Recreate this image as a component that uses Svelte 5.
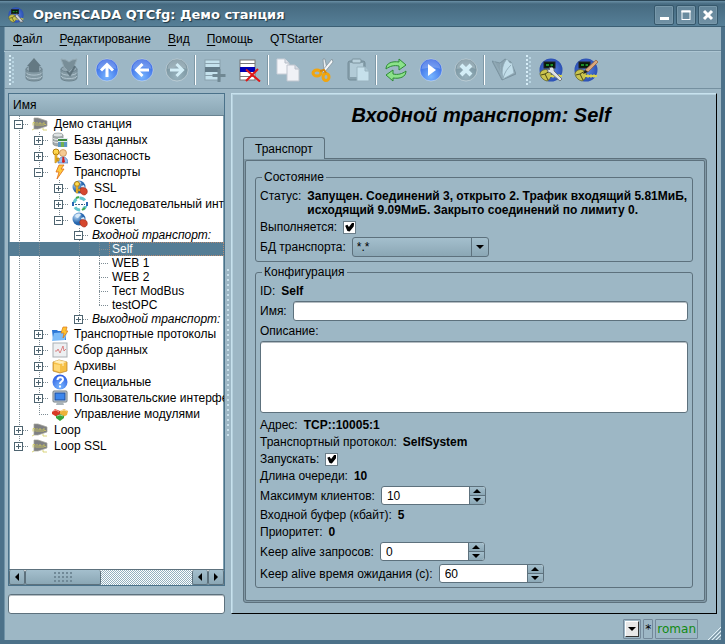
<script lang="ts">
	interface Row {
		level: number;
		text: string;
		box?: '+' | '-';
		icon?: string;
		italic?: boolean;
	}

	const menu = ['Файл', 'Редактирование', 'Вид', 'Помощь'];

	const groups = [
		[
			['load', 'Загрузить'],
			['save', 'Сохранить']
		],
		[
			['up', 'Вверх'],
			['back', 'Назад'],
			['forward', 'Вперёд']
		],
		[
			['add', 'Добавить'],
			['remove', 'Удалить']
		],
		[
			['copy', 'Копировать'],
			['cut', 'Вырезать'],
			['paste', 'Вставить']
		],
		[
			['refresh', 'Обновить'],
			['start', 'Запустить'],
			['stop', 'Остановить']
		],
		[['manual', 'Руководство']]
	];

	const starters = [
		['config', 'Конфигуратор'],
		['vision', 'Разработка']
	];

	const rows: Row[] = [
		{ level: 0, text: 'Демо станция', box: '-', icon: 'station' },
		{ level: 1, text: 'Базы данных', box: '+', icon: 'db' },
		{ level: 1, text: 'Безопасность', box: '+', icon: 'security' },
		{ level: 1, text: 'Транспорты', box: '-', icon: 'bolt' },
		{ level: 2, text: 'SSL', box: '+', icon: 'ssl' },
		{ level: 2, text: 'Последовательный интерфейс', box: '+', icon: 'serial' },
		{ level: 2, text: 'Сокеты', box: '-', icon: 'globe' },
		{ level: 3, text: 'Входной транспорт:', box: '-', italic: true },
		{ level: 4, text: 'Self' },
		{ level: 4, text: 'WEB 1' },
		{ level: 4, text: 'WEB 2' },
		{ level: 4, text: 'Тест ModBus' },
		{ level: 4, text: 'testOPC' },
		{ level: 3, text: 'Выходной транспорт:', box: '+', italic: true },
		{ level: 1, text: 'Транспортные протоколы', box: '+', icon: 'folder' },
		{ level: 1, text: 'Сбор данных', box: '+', icon: 'chart' },
		{ level: 1, text: 'Архивы', box: '+', icon: 'archive' },
		{ level: 1, text: 'Специальные', box: '+', icon: 'help' },
		{ level: 1, text: 'Пользовательские интерфейсы', box: '+', icon: 'screen' },
		{ level: 1, text: 'Управление модулями', icon: 'modules' },
		{ level: 0, text: 'Loop', box: '+', icon: 'station' },
		{ level: 0, text: 'Loop SSL', box: '+', icon: 'station' }
	];

	// is there another node of this level further down the same branch
	function hasNext(i: number, level: number): boolean {
		for (const row of rows.slice(i + 1)) {
			if (row.level < level) return false;
			if (row.level === level) return true;
		}
		return false;
	}

	const tree = rows.map((row, i) => ({
		...row,
		cells: Array.from({ length: row.level + 1 }, (_, c) => ({
			own: c === row.level,
			next: hasNext(i, c)
		}))
	}));

	let selected = $state('Self');
	let filter = $state('');
	let running = $state(true);
	let autostart = $state(true);
	let db = $state('*.*');
	let name = $state('');
	let description = $state('');
	let spins = $state({ clients: 10, requests: 0, wait: 60 });
</script>

{#snippet ball(fill: string)}
	<circle cx="12" cy="12" r="11" fill="url(#{fill})" stroke="#fff" stroke-opacity=".35" />
	<path d="M2.500 11a9.500 9.500 0 0 1 19 0c-6-2.500-12-1.500-19 0z" fill="#fff" opacity=".22" />
{/snippet}

{#snippet scada()}
	<circle cx="12" cy="12" r="11.500" fill="url(#scada)" />
	<rect x="5" y="4" width="11" height="6" fill="#061a08" stroke="#222" />
	<path d="M7 6h3v2h-3zM11.500 6h2.500v2h-2.500z" fill="#1d8a2a" />
	<path d="M1 15a6 6 0 0 1 11 0c1 3-1 7-4 8-4-1-7-4-7-8z" fill="#c9c44e" stroke="#55541c" stroke-width=".7" />
	<path d="M2 17l4-1 5-3M6 16l3 6" stroke="#4c4a14" fill="none" />
	<path d="M11 18h12" stroke="#d8d24f" stroke-width="2" />
	<path d="M14 16v4M17 16v4M20 16v4" stroke="#d8d24f" />
{/snippet}

{#snippet tool(id: string)}
	<svg class="tool-icon" viewBox="0 0 24 24" aria-hidden="true">
		{#if id === 'load' || id === 'save'}
			<path d="M4 11v9c0 4 16 4 16 0v-9" fill="#8399a3" stroke="#6d838e" />
			<ellipse cx="12" cy="11" rx="8" ry="3" fill="#90a5b0" stroke="#6d838e" />
			<path d="M4 14.500c1 3.500 15 3.500 16 0M4 18c1 3.500 15 3.500 16 0" fill="none" stroke="#b0c3cd" />
			{#if id === 'load'}
				<path d="M12 0l7 8h-2v6h-10v-6h-2z" fill="#647983" />
			{:else}
				<path d="M4 1l5 1 3 2 3-2 5-1-3 8-5 5-5-5z" fill="#788e98" stroke="#94a9b3" />
				<path d="M10 13l3 4 5-9" fill="none" stroke="#5e737d" stroke-width="2" />
			{/if}
		{:else if id === 'up'}
			{@render ball('blue')}
			<path d="M12 19v-12M6 12.500l6-6 6 6" fill="none" stroke="#fff" stroke-width="3" />
		{:else if id === 'back'}
			{@render ball('blue')}
			<path d="M19 12h-12M12.500 6l-6 6 6 6" fill="none" stroke="#fff" stroke-width="3" />
		{:else if id === 'forward'}
			{@render ball('grey')}
			<path d="M5 12h12M11.500 6l6 6-6 6" fill="none" stroke="#d3eef7" stroke-width="3" />
		{:else if id === 'add'}
			<rect x="2" y="2" width="15" height="20" fill="#c5e2ed" stroke="#8aa1ad" />
			<path d="M2 5.500h15M2 17.500h15" stroke="#8aa1ad" />
			<rect x="2" y="9" width="15" height="5" fill="#637b88" />
			<path d="M16 11v13M9.500 17.500h13" stroke="#708893" stroke-width="3" />
		{:else if id === 'remove'}
			<rect x="2" y="2" width="15" height="20" fill="#fff" stroke="#777" />
			<path d="M2 5.500h15M2 18.500h15" stroke="#777" />
			<rect x="2" y="9" width="15" height="5" fill="#0000b5" />
			<path d="M8 11.500l14 12M20 11l-12 12" stroke="#df1717" stroke-width="2" />
		{:else if id === 'copy'}
			<path d="M1 1h8l4 4v11h-12z" fill="#f5f6fa" stroke="#c9cfd8" />
			<path d="M9 1v4h4" fill="#dde1e9" stroke="#b7bec8" />
			<path d="M11 7h8l4 4v12h-12z" fill="#f0f1f6" stroke="#bfc6cf" />
			<path d="M19 7v4h4" fill="#d6dbe4" stroke="#b7bec8" />
		{:else if id === 'cut'}
			<path d="M12 1l2 0 2 10-3 4z" fill="#e7edf1" stroke="#7c8b94" stroke-width=".7" />
			<path d="M21 1l1 3-9 11-2-2z" fill="#f4f7f9" stroke="#7c8b94" stroke-width=".7" />
			<ellipse cx="6" cy="15" rx="4" ry="3" fill="none" stroke="#f1a50f" stroke-width="3" />
			<ellipse cx="15" cy="19" rx="3" ry="3.500" fill="none" stroke="#f1a50f" stroke-width="3" />
			<path d="M9 13l4-1 2 3" stroke="#d98708" stroke-width="2" fill="none" />
		{:else if id === 'paste'}
			<rect x="2" y="3" width="17" height="19" rx="2" fill="#88a1ad" stroke="#738b97" />
			<rect x="4" y="5" width="13" height="14" fill="#b2cbd7" />
			<rect x="6" y="1" width="9" height="4" rx="1" fill="#b9d1dc" stroke="#7a929d" />
			<path d="M11 9h8l4 4v10h-12z" fill="#c6e0eb" stroke="#9bb4c0" />
			<path d="M19 9v4h4" fill="#acc7d4" stroke="#9bb4c0" />
		{:else if id === 'refresh'}
			<path d="M2 11c0-6 6-8 13-7l0-3 7 6-7 5 0-4c-5-1-9 0-13 3z" fill="#8be28a" stroke="#2e8b36" />
			<path d="M22 13c0 6-6 8-13 7l0 3-7-6 7-5 0 4c5 1 9 0 13-3z" fill="#8be28a" stroke="#2e8b36" />
		{:else if id === 'start'}
			{@render ball('blue')}
			<path d="M9 6l8 6-8 6z" fill="#fff" />
		{:else if id === 'stop'}
			{@render ball('grey')}
			<path d="M7 7l10 10M17 7l-10 10" stroke="#d3eef7" stroke-width="4" />
		{:else if id === 'manual'}
			<path d="M0 3l10 19 14-6-5-12-6-3-5 4z" fill="#8ba3af" stroke="#718a96" stroke-width=".7" />
			<path d="M2 3l9 17c-2-7 0-15 4-19l3 4 2 0 2 10-11 6z" fill="#c2deea" stroke="#8fa9b6" stroke-width=".7" />
			<path d="M11 20c-3-6-3-10-2-15M11 20c2-6 4-9 8-13" fill="none" stroke="#94afbc" />
		{:else if id === 'config'}
			{@render scada()}
			<path d="M10 10l3-1 2 2 0 2 8 8-2 2-9-8-3-1-1-3 2 1 1-1z" fill="#dfe2e4" stroke="#62676b" stroke-width=".8" />
		{:else if id === 'vision'}
			{@render scada()}
			<path d="M11 12l11-10 2 2-10 10z" fill="#d9a77c" stroke="#8d5c39" stroke-width=".7" />
			<path d="M11 12l3 2-5 2z" fill="#222" />
		{/if}
	</svg>
{/snippet}

{#snippet planet()}
	<circle cx="7" cy="7" r="6.500" fill="url(#planet)" />
	<path d="M3 4c2-3 5-3 6-1-2 1-2 3-4 3zM9 6l3-1 1 3-3 1z" fill="#d8eaf8" />
	<path d="M8 9c1-2 6-2 7 1s-1 5-3 5-5-3-4-6z" fill="#d5472e" stroke="#a02a1a" stroke-width=".6" />
{/snippet}

{#snippet node(id: string)}
	<svg class="node-icon" viewBox="0 0 16 16" aria-hidden="true">
		{#if id === 'station'}
			<path d="M2 2h4l9 3v5l-9 3h-4z" fill="#7f8083" stroke="#a5a59a" stroke-width=".7" />
			<path d="M1 9.500v-3h2v3M5 6v4M7 10v-3h2v3M11 10v-3h2M12 8.500h2M2 13l-2 1M11 12v2h4" fill="none" stroke="#cfc95a" stroke-width=".8" />
		{:else if id === 'db'}
			<path d="M1 3v9c0 2 8 3 10 1v-10z" fill="#a4abad" stroke="#7c8588" stroke-width=".7" />
			<ellipse cx="6" cy="3" rx="5" ry="2" fill="#dfe3e4" stroke="#8c9597" stroke-width=".7" />
			<path d="M1 6c1 2 9 2 10 0M1 9c1 2 9 2 10 0" stroke="#eef0f0" fill="none" />
			<rect x="6" y="6" width="10" height="9" fill="#e0ebef" />
			<path d="M6 7h9v2h-9z" fill="#3c8a3e" />
			<path d="M6 10h3v5h-3zM12 10h3v5h-3z" fill="#5b98c5" />
			<path d="M9 10h3v5h-3z" fill="#74b04f" />
		{:else if id === 'security'}
			<circle cx="11" cy="5" r="3.500" fill="#f5ca92" stroke="#c28445" stroke-width=".7" />
			<path d="M6 15c0-8 10-8 10 0z" fill="#9cc0ee" stroke="#4b75b5" stroke-width=".7" />
			<path d="M10.500 9h1.500l1 5-2 1-1-1z" fill="#d32020" />
			<circle cx="4" cy="4" r="3" fill="#ffd74b" stroke="#b47b0c" />
			<path d="M3 6h2v8l-2 1zM5 10h2v3h-2z" fill="#f8c22d" stroke="#b47b0c" stroke-width=".6" />
		{:else if id === 'bolt'}
			<path d="M7 1h5l-3 4h3l-7 10 2-7h-3z" fill="#ffca3d" stroke="#dd6a16" stroke-width=".8" />
		{:else if id === 'ssl'}
			{@render planet()}
			<circle cx="5" cy="4" r="2.500" fill="#ffdc52" stroke="#a87910" />
			<path d="M4 6h2v7h-2zM6 9h2v2h-2z" fill="#f3bc2b" stroke="#a87910" stroke-width=".5" />
		{:else if id === 'globe'}
			{@render planet()}
		{:else if id === 'serial'}
			<circle cx="8" cy="8" r="6" fill="none" stroke="#63c4cd" stroke-width="3" stroke-dasharray="6 3" />
			<path d="M1 6v4M15 6v4" stroke="#2a67b5" stroke-width="2" />
			<path d="M4 2l3-1M10 14l3-2" stroke="#42a949" stroke-width="2" />
			<path d="M2 7h12v3h-12z" fill="#fff" />
			<path d="M3 8.500h10" stroke="#3c5d85" stroke-dasharray="2 1" />
		{:else if id === 'folder'}
			<path d="M0 4h5l1 1h8v9h-13z" fill="#2d78d6" />
			<path d="M2 7l13-1-2 8-13 1z" fill="#7cbcf9" />
			<path d="M11 1h4l-1 4h2l-5 7 1-5h-3z" fill="#ffc331" stroke="#d97517" stroke-width=".7" />
		{:else if id === 'chart'}
			<rect x="1" y="1" width="14" height="14" fill="#edf0f2" stroke="#a9afb4" />
			<path d="M3 9l2 0 1-2 2 4 3-7 1 5 2-2" fill="none" stroke="#d66a6a" stroke-width=".8" />
		{:else if id === 'archive'}
			<path d="M1 4l6-2 8 2v9l-7 2-7-2z" fill="#f6bf45" stroke="#b77d1b" stroke-width=".7" />
			<path d="M1 4l6-2 8 2-7 2z" fill="#ffe9ab" />
			<path d="M2 6l6 1v7l-6-2z" fill="#ffd876" />
			<path d="M4 3l7 2v3" stroke="#fff3cb" fill="none" />
		{:else if id === 'help'}
			<circle cx="8" cy="8" r="7.500" fill="url(#blue)" />
			<path d="M5.500 6c0-4 5.500-3.500 5.500-.5 0 2-3 2-3 4.500M8 11.500v2" fill="none" stroke="#fff" stroke-width="2" />
		{:else if id === 'screen'}
			<rect x="1" y="1" width="14" height="11" rx="1" fill="#cdd5da" stroke="#6d7980" />
			<rect x="3" y="3" width="10" height="7" fill="#3c86ec" stroke="#1e4e9c" />
			<path d="M5 12h6l1 3h-8z" fill="#aab3b8" />
		{:else if id === 'modules'}
			<path d="M0 6l3-3 5 2v4l-3 2-5-3z" fill="#d93a26" />
			<path d="M8 5l4-2 4 2-1 4-4 2-3-2z" fill="#edb13a" />
			<path d="M4 10l4-2 4 2v2l-4 3-4-3z" fill="#38a43a" />
			<path d="M1 5l3-1 3 2M9 5l3-1 3 1M5 10l3-1 3 1" fill="none" stroke="#fff" opacity=".5" />
		{/if}
	</svg>
{/snippet}

{#snippet arrow(d: string)}
	<svg class="arrow" viewBox="0 0 8 8" aria-hidden="true"><path {d} /></svg>
{/snippet}

{#snippet spin(id: 'clients' | 'requests' | 'wait', label: string)}
	<div class="row">
		<label for={id}>{label}</label>
		<span class="spin">
			<input {id} type="number" min="0" bind:value={spins[id]} />
			<span class="steps">
				<button aria-label="Больше" onclick={() => spins[id]++}>{@render arrow('M4 2l4 4h-8z')}</button>
				<button aria-label="Меньше" onclick={() => spins[id]--}>{@render arrow('M4 6l-4-4h8z')}</button>
			</span>
		</span>
	</div>
{/snippet}

<svg class="defs" aria-hidden="true">
	<defs>
		<radialGradient id="blue" cx=".5" cy=".8" r=".8">
			<stop offset="0" stop-color="#78b6ff" />
			<stop offset="1" stop-color="#2c5ce0" />
		</radialGradient>
		<radialGradient id="grey" cx=".5" cy=".8" r=".8">
			<stop offset="0" stop-color="#98b3be" />
			<stop offset="1" stop-color="#728d99" />
		</radialGradient>
		<radialGradient id="scada">
			<stop offset="0" stop-color="#5d88e4" />
			<stop offset="1" stop-color="#2b50b4" />
		</radialGradient>
		<radialGradient id="planet" cx=".3" cy=".3">
			<stop offset="0" stop-color="#b9d9f5" />
			<stop offset="1" stop-color="#2566ae" />
		</radialGradient>
	</defs>
</svg>

<div class="window">
	<header class="titlebar">
		<svg class="app-icon" viewBox="0 0 24 24" aria-hidden="true">
			{@render scada()}
			<path d="M13 10l10 12-4 1-8-9z" fill="#cfd2d4" stroke="#555" />
		</svg>
		<h1>OpenSCADA QTCfg: Демо станция</h1>
		<button aria-label="Свернуть"><svg viewBox="0 0 18 18"><path d="M5 12.500h9" stroke-width="3" /></svg></button>
		<button aria-label="Развернуть"><svg viewBox="0 0 18 18"><path d="M4.500 5h9M4.500 13.500h9M5 5v8M13 5v8" stroke-width="1" /><path d="M4.500 5.500h9" stroke-width="2" /></svg></button>
		<button aria-label="Закрыть"><svg viewBox="0 0 18 18"><path d="M5 5l8 8M13 5l-8 8" stroke-width="3" /></svg></button>
	</header>

	<nav class="menubar">
		{#each menu as item (item)}
			<button><u>{item[0]}</u>{item.slice(1)}</button>
		{/each}
		<button>QTStarter</button>
	</nav>

	<div class="toolbar" role="toolbar" aria-label="Панель инструментов">
		<span class="grip"></span>
		{#each groups as group, i (i)}
			{#if i > 0}<span class="sep"></span>{/if}
			{#each group as [id, label] (id)}
				<button aria-label={label}>{@render tool(id)}</button>
			{/each}
		{/each}
		<span class="grip second"></span>
		{#each starters as [id, label] (id)}
			<button aria-label={label}>{@render tool(id)}</button>
		{/each}
	</div>

	<main>
		<aside>
			<div class="tree">
				<div class="tree-head">Имя</div>
				<div class="tree-body" role="tree" aria-label="Имя">
					{#each tree as row (row.text)}
						<div
							class="node"
							class:tall={row.icon}
							class:selected={selected === row.text}
							role="treeitem"
							tabindex="-1"
							aria-selected={selected === row.text}
							onclick={() => (selected = row.text)}
							onkeydown={() => {}}
						>
							{#each row.cells as cell, c (c)}
								<span class="cell" class:own={cell.own} class:next={cell.next}>
									{#if cell.own && row.box}
										<svg class="box" viewBox="0 0 9 9" aria-hidden="true">
											<rect x=".5" y=".5" width="8" height="8" />
											<path d={row.box === '+' ? 'M2 4.500h5M4.500 2v5' : 'M2 4.500h5'} />
										</svg>
									{/if}
								</span>
							{/each}
							{#if row.icon}{@render node(row.icon)}{/if}
							<span class="node-text" class:italic={row.italic}>{row.text}</span>
						</div>
					{/each}
				</div>
				<div class="scrollbar">
					<button aria-label="Влево">{@render arrow('M6 0v8l-4-4z')}</button>
					<span class="thumb"><i></i></span>
					<span class="track"></span>
					<button aria-label="Влево">{@render arrow('M6 0v8l-4-4z')}</button>
					<button aria-label="Вправо">{@render arrow('M2 0v8l4-4z')}</button>
				</div>
			</div>
			<input class="text-input" aria-label="Поиск" bind:value={filter} />
		</aside>

		<div class="splitter"><span></span></div>

		<section class="page">
			<h2>Входной транспорт: Self</h2>
			<div class="tabs" role="tablist">
				<button class="tab" role="tab" aria-selected="true">Транспорт</button>
			</div>
			<div class="panel" role="tabpanel">
				<div class="panel-inner">
					<fieldset>
						<legend>Состояние</legend>
						<div class="row top">
							<span>Статус:</span>
							<b>
								Запущен. Соединений 3, открыто 2. Трафик входящий 5.81МиБ,<br />
								исходящий 9.09МиБ. Закрыто соединений по лимиту 0.
							</b>
						</div>
						<div class="row">
							<label for="running">Выполняется:</label>
							<input id="running" type="checkbox" bind:checked={running} />
						</div>
						<div class="row">
							<label for="db">БД транспорта:</label>
							<span class="combo">
								<select id="db" bind:value={db}>
									<option>*.*</option>
								</select>
								<span class="drop">{@render arrow('M4 6l-4-4h8z')}</span>
							</span>
						</div>
					</fieldset>

					<fieldset>
						<legend>Конфигурация</legend>
						<div class="row"><span>ID:</span><b>Self</b></div>
						<div class="row">
							<label for="name">Имя:</label>
							<input id="name" class="text-input" bind:value={name} />
						</div>
						<label for="description">Описание:</label>
						<textarea id="description" bind:value={description}></textarea>
						<div class="row"><span>Адрес:</span><b>TCP::10005:1</b></div>
						<div class="row"><span>Транспортный протокол:</span><b>SelfSystem</b></div>
						<div class="row">
							<label for="autostart">Запускать:</label>
							<input id="autostart" type="checkbox" bind:checked={autostart} />
						</div>
						<div class="row"><span>Длина очереди:</span><b>10</b></div>
						{@render spin('clients', 'Максимум клиентов:')}
						<div class="row"><span>Входной буфер (кбайт):</span><b>5</b></div>
						<div class="row"><span>Приоритет:</span><b>0</b></div>
						{@render spin('requests', 'Keep alive запросов:')}
						{@render spin('wait', 'Keep alive время ожидания (с):')}
					</fieldset>
				</div>
			</div>
		</section>
	</main>

	<footer>
		<span class="status"><button aria-label="Список">{@render arrow('M4 6l-4-4h8z')}</button></span>
		<span class="status">*</span>
		<span class="status user">roman</span>
		<svg class="resize" viewBox="0 0 13 13" aria-hidden="true">
			<path d="M0 13l13-13M4 13l9-9M8 13l5-5" stroke="#e4f2f8" />
			<path d="M2 13l11-11M6 13l7-7M10 13l3-3" stroke="#7992a0" />
		</svg>
	</footer>
</div>

<style>
	:global(body) {
		background: #9db7c5;
	}

	.defs {
		position: absolute;
		width: 0;
		height: 0;
	}

	.window {
		--line: #5d717d;
		--face: linear-gradient(#a4bfcd, #8ba7b5);
		box-sizing: border-box;
		display: flex;
		flex-direction: column;
		min-height: 100vh;
		border: solid #4c7189;
		border-width: 0 4px 4px;
		box-shadow: inset 1px 0 #7093a8;
		background: #9db7c5;
		color: #000;
		font: 12px/14px 'Liberation Sans', Arial, sans-serif;
	}

	.window *,
	.window *::before {
		box-sizing: border-box;
	}

	button,
	input,
	select,
	textarea {
		margin: 0;
		padding: 0;
		border: 0;
		border-radius: 0;
		background: none;
		color: inherit;
		font: inherit;
	}

	svg {
		display: block;
		flex: none;
	}

	.titlebar {
		display: flex;
		align-items: center;
		gap: 2px;
		height: 27px;
		margin: 0 -4px;
		padding: 2px 7px 0 8px;
		border-top: 1px solid #2c4757;
		border-bottom: 1px solid #3c5f74;
		background: linear-gradient(#6a8fa5, #466a80 3px, #567f97);
	}

	.app-icon {
		width: 16px;
		height: 16px;
	}

	h1 {
		flex: 1;
		margin: 0;
		padding-left: 7px;
		color: #fff;
		font: bold 13px/16px 'DejaVu Sans', sans-serif;
		text-shadow: 1px 1px 1px #1d3442;
	}

	.titlebar button {
		width: 20px;
		height: 20px;
		border: 1px solid #36586c;
		border-radius: 2px;
		background: linear-gradient(#64869a, #7191a4);
		box-shadow: inset 0 0 0 1px #7898aa;
	}

	.titlebar button svg {
		width: 18px;
		height: 18px;
		fill: none;
		stroke: #fff;
	}

	.menubar {
		display: flex;
		gap: 17px;
		height: 24px;
		padding-left: 9px;
		border-bottom: 1px solid #7590a0;
	}

	u {
		text-underline-offset: 2px;
	}

	.toolbar {
		display: flex;
		align-items: center;
		height: 38px;
		padding-left: 4px;
		border-top: 1px solid #adc6d3;
		border-bottom: 1px solid #7590a0;
	}

	.toolbar button {
		display: grid;
		place-items: center;
		width: 35px;
		height: 30px;
	}

	.tool-icon {
		width: 24px;
		height: 24px;
	}

	.grip {
		width: 8px;
		height: 30px;
		background:
			conic-gradient(from 270deg at 2px 2px, #d6edf7 90deg, transparent 0) 1px 0 / 8px 4px,
			conic-gradient(from 270deg at 2px 2px, #b9d5e2 90deg, transparent 0) 4px 2px / 8px 4px;
	}

	.grip.second {
		margin: 0 0 0 4px;
	}

	.sep {
		width: 3px;
		height: 30px;
		border-left: 1px solid #7f99a7;
		background: linear-gradient(90deg, #fff 1px, transparent 1px);
	}

	main {
		flex: 1;
		display: flex;
		padding: 4px 4px 0;
	}

	aside {
		display: flex;
		flex-direction: column;
		flex: 0 0 217px;
		gap: 8px;
		min-width: 0;
	}

	.tree {
		flex: 1;
		display: flex;
		flex-direction: column;
		border: 1px solid #4b728a;
		box-shadow: inset 0 0 0 1px #82a1b1;
		background: #fff;
		overflow: hidden;
	}

	.tree-head {
		height: 22px;
		padding: 4px 4px 0;
		border-bottom: 1px solid #698391;
		background: var(--face);
	}

	.tree-body {
		flex: 1;
		overflow: hidden;
	}

	.node {
		display: flex;
		align-items: center;
		height: 14px;
		white-space: nowrap;
		cursor: default;
	}

	.node.tall {
		height: 16px;
	}

	.node.selected {
		background: #557d95;
		color: #fff;
	}

	/* dotted branch lines, a pixel on and a pixel off */
	.cell {
		--dots: repeating-linear-gradient(#7e8c94 0 1px, transparent 1px 2px);
		--dash: repeating-linear-gradient(90deg, #7e8c94 0 1px, transparent 1px 2px);
		display: grid;
		align-items: center;
		flex: 0 0 20px;
		height: 100%;
		padding-left: 5px;
	}

	.cell.next {
		background: var(--dots) 10px 0 / 1px 100% no-repeat;
	}

	.cell.own {
		background:
			var(--dots) 10px 0 / 1px 50% no-repeat,
			var(--dash) 10px 50% / 10px 1px no-repeat;
	}

	.cell.own.next {
		background:
			var(--dots) 10px 0 / 1px 100% no-repeat,
			var(--dash) 10px 50% / 10px 1px no-repeat;
	}

	.box {
		width: 9px;
		height: 9px;
		fill: #fff;
		stroke: #4e6470;
	}

	.node-icon {
		width: 16px;
		height: 16px;
		margin: 0 3px;
	}

	.node-text {
		flex: 1;
		padding-left: 3px;
	}

	.selected .node-text {
		outline: 1px dotted #b58a72;
		outline-offset: -1px;
	}

	.italic {
		font-style: italic;
	}

	.scrollbar {
		display: flex;
		height: 16px;
		border-top: 1px solid var(--line);
	}

	.scrollbar button,
	.thumb {
		display: grid;
		place-items: center;
		flex: 0 0 16px;
		border: 1px solid var(--line);
		border-top: 0;
		border-radius: 2px;
		background: var(--face);
	}

	.scrollbar .thumb {
		flex-basis: 76px;
	}

	.thumb i {
		width: 19px;
		height: 10px;
		background: conic-gradient(from 270deg at 2px 2px, #708997 90deg, transparent 0) 0 0 / 4px 4px;
	}

	.track {
		flex: 1;
		background: conic-gradient(#93b0bf 90deg, #fff 0 180deg, #93b0bf 0 270deg, #fff 0) 0 0 / 2px 2px;
	}

	.arrow {
		width: 8px;
		height: 8px;
		fill: #000;
	}

	.text-input,
	textarea {
		display: block;
		width: 100%;
		height: 20px;
		padding: 0 4px;
		border: 1px solid var(--line);
		border-radius: 3px;
		background: #fff;
		box-shadow: inset 0 1px #b5bdc2;
	}

	.splitter {
		display: grid;
		place-items: center;
		flex: 0 0 6px;
	}

	.splitter span {
		width: 4px;
		height: 170px;
		background: conic-gradient(from 270deg at 2px 2px, #c9e0eb 90deg, transparent 0) 1px 0 / 4px 5px;
	}

	.page {
		flex: 1;
		display: flex;
		flex-direction: column;
		min-width: 0;
		padding: 9px 9px 10px 11px;
		border: 1px solid;
		border-color: #c8e2ee #000 #000 #c8e2ee;
		box-shadow: inset 1px 1px #b5d0dd;
	}

	h2 {
		margin: 0;
		padding-left: 12px;
		font: italic bold 20px/24px 'Liberation Sans', Arial, sans-serif;
		text-align: center;
	}

	.tabs {
		display: flex;
		padding-top: 10px;
	}

	.tab {
		position: relative;
		z-index: 1;
		height: 22px;
		margin-bottom: -1px;
		padding: 0 11px;
		border: 1px solid var(--line);
		border-bottom: 0;
		border-radius: 3px 3px 0 0;
		background: #9db7c5;
	}

	.panel {
		flex: 1;
		display: flex;
		padding: 1px;
		border: 1px solid var(--line);
		border-radius: 0 3px 3px 3px;
		background: #8199a6;
	}

	.panel-inner {
		flex: 1;
		display: flex;
		flex-direction: column;
		gap: 3px;
		min-width: 0;
		padding: 9px 11px 11px 9px;
		border: 1px solid var(--line);
		border-radius: 2px;
		background: #9db7c5;
	}

	fieldset {
		display: flex;
		flex-direction: column;
		gap: 3px;
		min-width: 0;
		margin: 0;
		padding: 5px 4px 4px;
		border: 1px solid var(--line);
		border-radius: 3px;
	}

	legend {
		margin-left: 2px;
		padding: 0 2px;
	}

	.row {
		display: flex;
		align-items: center;
		gap: 6px;
		white-space: nowrap;
	}

	.row.top {
		align-items: flex-start;
	}

	input[type='checkbox'] {
		appearance: none;
		display: grid;
		place-items: center;
		width: 13px;
		height: 13px;
		border: 1px solid #6b7e89;
		background: #fff;
	}

	input[type='checkbox']:checked::before {
		content: '';
		width: 9px;
		height: 9px;
		background: #000;
		clip-path: polygon(0 35%, 25% 25%, 42% 50%, 80% 0, 100% 8%, 95% 45%, 50% 100%, 25% 95%);
	}

	.combo {
		display: grid;
		grid-template-columns: 118px 17px;
		height: 20px;
		border: 1px solid var(--line);
		border-radius: 3px;
		background: var(--face);
	}

	.combo select {
		grid-area: 1 / 1 / 2 / 3;
		appearance: none;
		padding-left: 4px;
	}

	.drop {
		grid-area: 1 / 2;
		display: grid;
		place-items: center;
		border-left: 1px solid var(--line);
		pointer-events: none;
	}

	textarea {
		height: 72px;
		margin-bottom: 2px;
		resize: none;
	}

	.spin {
		display: flex;
		height: 19px;
		border: 1px solid var(--line);
		border-radius: 3px;
		background: #fff;
		overflow: hidden;
	}

	.spin input {
		width: 87px;
		padding-left: 5px;
		appearance: textfield;
	}

	.spin input::-webkit-inner-spin-button {
		appearance: none;
	}

	.steps {
		display: grid;
		grid-template-rows: 1fr 1fr;
		width: 16px;
		border-left: 1px solid var(--line);
	}

	.steps button {
		display: grid;
		place-items: center;
		background: var(--face);
	}

	.steps button + button {
		border-top: 1px solid var(--line);
	}

	footer {
		display: flex;
		justify-content: flex-end;
		gap: 2px;
		height: 26px;
		padding: 5px 0 0;
		font-family: 'DejaVu Sans', sans-serif;
	}

	.status {
		display: grid;
		place-items: center;
		height: 20px;
		padding: 0 1px;
		border: 1px solid #74899a;
		border-radius: 1px;
	}

	.status button {
		display: grid;
		place-items: center;
		width: 14px;
		height: 16px;
		border: 1px solid;
		border-color: #fff #333 #333 #fff;
		background: #e8e8e8;
	}

	.user {
		color: #118a11;
	}

	.resize {
		align-self: flex-end;
		width: 13px;
		height: 13px;
		margin-left: 8px;
	}
</style>
